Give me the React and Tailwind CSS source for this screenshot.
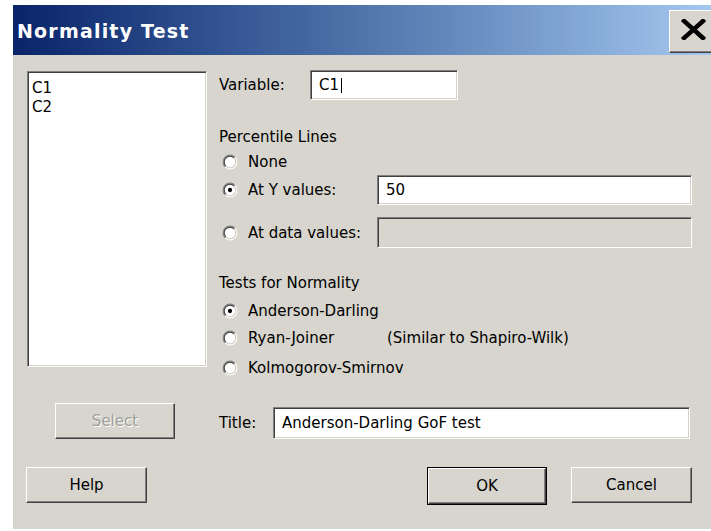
import React from 'react';

// classic 3D edges
const raised = 'border border-t-white border-l-white border-b-[#404040] border-r-[#404040] shadow-[inset_-1px_-1px_0_#808080]';
const sunken = 'border border-t-[#808080] border-l-[#808080] border-b-white border-r-white shadow-[inset_1px_1px_0_#404040,inset_-1px_-1px_0_#d4d0c8]';

function Radio({ checked }) {
  return (
    <svg width="16" height="16" viewBox="0 0 15 15" className="shrink-0">
      <circle cx="7.5" cy="7.5" r="5" fill="#fff" />
      <path d="M2.904 12.096 A6.5 6.5 0 0 1 12.096 2.904" fill="none" stroke="#808080" />
      <path d="M12.096 2.904 A6.5 6.5 0 0 1 2.904 12.096" fill="none" stroke="#fff" />
      <path d="M3.611 11.389 A5.5 5.5 0 0 1 11.389 3.611" fill="none" stroke="#404040" />
      <path d="M11.389 3.611 A5.5 5.5 0 0 1 3.611 11.389" fill="none" stroke="#d4d0c8" />
      {checked && <circle cx="7.5" cy="7.5" r="2" fill="#000" />}
    </svg>
  );
}

function Option({ label, checked, className = '' }) {
  return (
    <div className={`flex items-center gap-[10px] pl-[3px] h-[18px] ${className}`}>
      <Radio checked={checked} />
      <span>{label}</span>
    </div>
  );
}

function Button({ children, disabled, className = '' }) {
  return (
    <button
      className={`${raised} h-[36px] flex items-center justify-center bg-[#d7d5cd] ${
        disabled ? 'text-[#a09f98] [text-shadow:1px_1px_0_#fff]' : 'text-black'
      } ${className}`}
    >
      {children}
    </button>
  );
}

export default function App() {
  return (
    <div className="w-[711px] h-[531px] overflow-hidden bg-white pl-[13px] pt-[5px] font-['DejaVu_Sans',sans-serif] text-[15px] leading-[18px] text-black">
      <div className="w-[707px] h-[524px] bg-[#d7d5cd] flex flex-col">
        {/* caption */}
        <div className="h-[50px] flex items-start bg-gradient-to-r from-[#0a246a] to-[#a6caf0]">
          <span className="self-center pl-[4px] pt-[2px] text-white font-bold text-[19px] tracking-[1.2px]">
            Normality Test
          </span>
          <div className={`${raised} ml-auto mt-[5px] w-[51px] h-[43px] bg-[#d7d5cd] flex pl-[11px] pt-[8px]`}>
            <svg width="25" height="21" viewBox="0 0 25 21">
              <path d="M3 2 L22 19 M22 2 L3 19" stroke="#000" strokeWidth="4.5" strokeLinecap="square" />
            </svg>
          </div>
        </div>

        <div className="flex flex-col pl-[14px] pt-[15px]">
          <div className="flex gap-[12px]">
            <div className={`${sunken} mt-[1px] w-[180px] h-[296px] bg-white pl-[4px] pt-[7px] leading-[19px]`}>
              <div>C1</div>
              <div>C2</div>
            </div>

            <div className="flex flex-col w-[473px]">
              <div className="flex items-center h-[30px]">
                <span className="w-[91px]">Variable:</span>
                <div className={`${sunken} w-[148px] h-[30px] bg-white flex items-center pl-[8px]`}>
                  <span>C1</span>
                  <span className="ml-[2px] w-[1px] h-[15px] bg-black" />
                </div>
              </div>

              <div className="mt-[28px] h-[18px]">Percentile Lines</div>
              <Option label="None" className="mt-[7px]" />
              <div className="mt-[4px] flex items-center h-[30px]">
                <div className="w-[158px]">
                  <Option label="At Y values:" checked />
                </div>
                <div className={`${sunken} w-[315px] h-[30px] bg-white flex items-center pl-[8px]`}>50</div>
              </div>
              <div className="mt-[12px] flex items-center h-[31px]">
                <div className="w-[158px]">
                  <Option label="At data values:" />
                </div>
                <div className={`${sunken} w-[315px] h-[31px] bg-[#d7d5cd]`} />
              </div>

              <div className="mt-[26px] h-[18px]">Tests for Normality</div>
              <Option label="Anderson-Darling" checked className="mt-[10px]" />
              <div className="mt-[9px] flex items-center">
                <div className="w-[168px]">
                  <Option label="Ryan-Joiner" />
                </div>
                <span>(Similar to Shapiro-Wilk)</span>
              </div>
              <Option label="Kolmogorov-Smirnov" className="mt-[12px]" />
            </div>
          </div>

          <div className="mt-[26px] flex items-end">
            <div className="w-[192px]">
              <Button disabled className="ml-[28px] w-[120px]">Select</Button>
            </div>
            <span className="w-[54px] h-[32px] flex items-center">Title:</span>
            <div className={`${sunken} w-[417px] h-[32px] bg-white flex items-center pl-[8px]`}>
              Anderson-Darling GoF test
            </div>
          </div>

          <div className="mt-[28px] flex">
            <Button className="ml-[-1px] w-[121px]">Help</Button>
            <div className="ml-[280px] border border-black">
              <Button className="w-[118px] h-[34px]">OK</Button>
            </div>
            <Button className="ml-[24px] w-[121px]">Cancel</Button>
          </div>
        </div>
      </div>
    </div>
  );
}
